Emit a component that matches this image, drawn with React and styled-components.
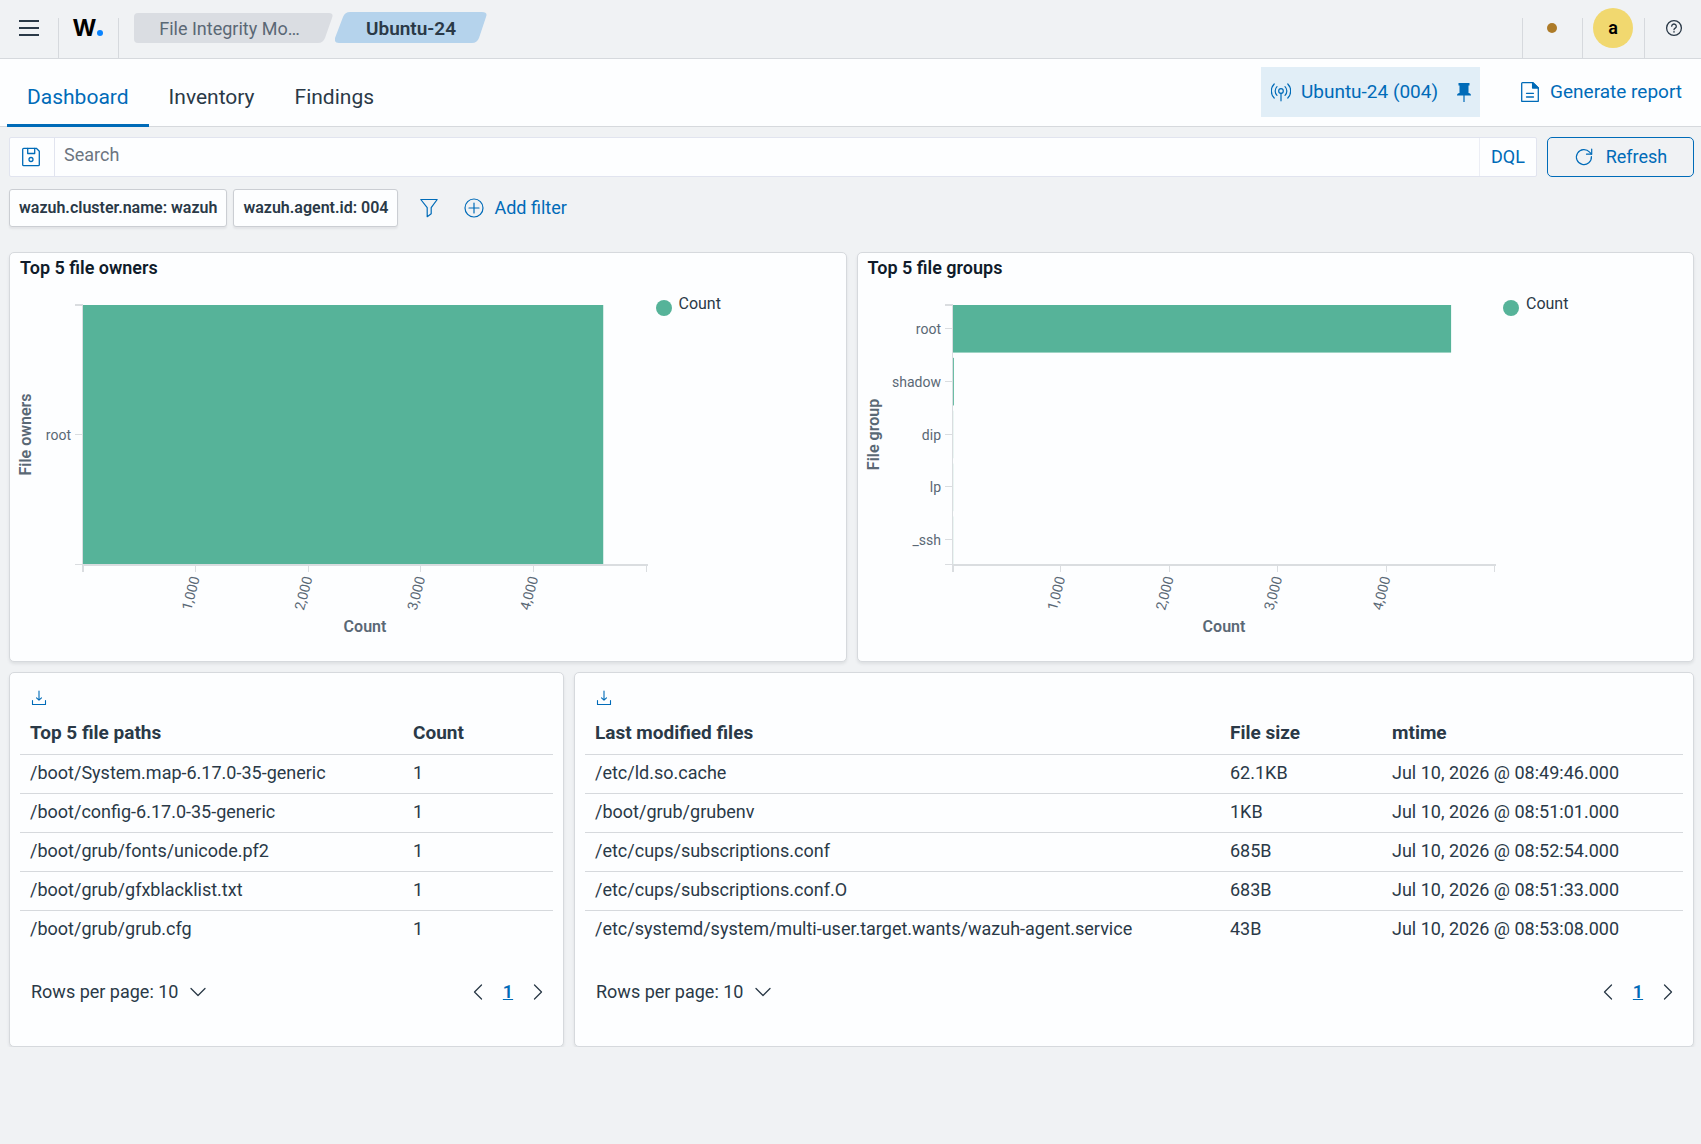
import React, { useLayoutEffect, useRef, useState } from "react";
import styled, { createGlobalStyle, css } from "styled-components";

const c = {
  page: "#f0f2f4",
  panel: "#fdfeff",
  line: "#d6d9dd",
  text: "#2a3947",
  heading: "#0f1b2a",
  subdued: "#5a6875",
  blue: "#006bb8",
  green: "#56b399",
};

const GlobalStyle = createGlobalStyle`
  *, *::before, *::after { box-sizing: border-box; }
  body {
    margin: 0;
    background: ${c.page};
    color: ${c.text};
    font: 400 18px/24px Roboto, sans-serif;
  }
  button, input, a { font: inherit; color: inherit; }
  button { margin: 0; padding: 0; border: 0; background: none; cursor: pointer; }
  a { text-decoration: none; }
  svg { display: block; flex: none; }
`;

const Header = styled.header`
  display: flex;
  justify-content: space-between;
  height: 59px;
  border-bottom: 1px solid ${c.line};
`;

const HeaderSide = styled.div`
  display: flex;
`;

const HeaderCell = styled.div`
  display: flex;
  width: ${(p) => p.$width}px;
  height: 58px;
  padding: ${(p) => (p.$divider ? "0 2px 2px 0" : "0 0 2px 2px")};
  align-items: center;
  justify-content: center;
  background: ${(p) =>
    p.$divider ? `linear-gradient(${c.line}, ${c.line}) right bottom / 1px 40px no-repeat` : "none"};
`;

const HeaderEdge = styled.div`
  width: 1px;
  height: 40px;
  margin-top: 18px;
  background: ${c.line};
`;

const IconButton = styled.button`
  display: flex;
  align-items: center;
  justify-content: center;
  width: ${(p) => p.$width || 30}px;
  height: 30px;
  color: ${(p) => (p.$plain ? c.text : c.blue)};
`;

const Logo = styled.a`
  display: flex;
  align-items: baseline;
  gap: 1px;
  color: #000;
  font: 700 23px/30px Inter, sans-serif;
`;

const LogoDot = styled.span`
  width: 6px;
  height: 6px;
  border-radius: 50%;
  background: #0a84ff;
`;

const Crumbs = styled.nav`
  display: flex;
  align-items: flex-end;
  height: 43px;
  padding-left: 15px;
  gap: 2px;
`;

const CrumbShape = styled.svg`
  position: absolute;
  inset: 0;
  width: 100%;
  height: 100%;
  z-index: -1;
`;

const Crumb = styled.a`
  position: relative;
  z-index: 0;
  width: ${(p) => p.$width}px;
  height: 30px;
  padding-right: 8px;
  line-height: 31px;
  text-align: center;
  color: ${c.subdued};
  ${(p) =>
    p.$current &&
    css`
      height: 31px;
      padding-right: 0;
      line-height: 34px;
      color: ${c.text};
      font-size: 19px;
      font-weight: 600;
    `}
`;

const StatusDot = styled.span`
  width: 10px;
  height: 10px;
  border-radius: 50%;
  background: #ad7b28;
`;

const Avatar = styled.button`
  width: 40px;
  height: 40px;
  border-radius: 50%;
  background: #f1d86f;
  color: #000;
  font-weight: 600;
`;

const TabBar = styled.div`
  display: flex;
  justify-content: space-between;
  height: 68px;
  padding: 0 19px 0 7px;
  background: ${c.panel};
  border-bottom: 1px solid ${c.line};
`;

const Tabs = styled.nav`
  display: flex;
  margin-bottom: -1px;
`;

const Tab = styled.a`
  padding: 25px 20px 0;
  font-size: 21px;
  line-height: 26px;
  ${(p) =>
    p.$active &&
    css`
      color: ${c.blue};
      border-bottom: 3px solid ${c.blue};
    `}
`;

const TabActions = styled.div`
  display: flex;
  height: 50px;
  margin-top: 8px;
  gap: 40px;
  color: ${c.blue};
  font-size: 19px;
`;

const AgentBox = styled.div`
  display: flex;
  align-items: center;
  padding: 0 6px 0 10px;
  gap: 16px;
  background: #e1eef7;
`;

const TextButton = styled.button`
  display: flex;
  align-items: center;
  gap: 10px;
  color: ${c.blue};
  white-space: nowrap;
`;

const TextPicker = styled(TextButton)`
  gap: 12px;
  color: ${c.text};
`;

const SearchRow = styled.div`
  display: flex;
  gap: 10px;
  padding: 10px 7px 0 9px;
`;

const SearchBox = styled.div`
  display: flex;
  flex: 1;
  height: 40px;
  border: 1px solid #e1e4ef;
  border-radius: 2px;
  background: ${c.panel};
`;

const SaveButton = styled(IconButton)`
  height: 38px;
  width: 45px;
  padding-right: 2px;
  border-right: 1px solid #e1e4ef;
`;

const SearchInput = styled.input`
  flex: 1;
  min-width: 0;
  border: 0;
  outline: 0;
  padding: 0 9px 4px;
  background: none;
  &::placeholder { color: #6c757f; opacity: 1; }
`;

const LanguageButton = styled.button`
  width: 57px;
  border-left: 1px solid #eceef5;
  color: ${c.blue};
`;

const RefreshButton = styled.button`
  display: flex;
  align-items: center;
  justify-content: center;
  gap: 12px;
  width: 147px;
  height: 40px;
  border: 1px solid ${c.blue};
  border-radius: 5px;
  color: ${c.blue};
`;

const FilterRow = styled.div`
  display: flex;
  align-items: center;
  padding: 12px 9px 0;
`;

const Pill = styled.button`
  height: 38px;
  margin-right: 6px;
  padding: 0 9px;
  border: 1px solid #cbced3;
  border-radius: 3px;
  background: ${c.panel};
  box-shadow: 0 2px 2px rgba(60, 70, 80, 0.08);
  color: ${c.text};
  font-size: 16px;
  font-weight: 600;
`;

const FilterActions = styled.div`
  display: flex;
  align-items: center;
  gap: 20px;
  padding-left: 10px;
`;

const Grid = styled.div`
  display: grid;
  grid-template-columns: ${(p) => p.$columns};
  gap: 10px;
  padding: ${(p) => p.$top}px 7px 0 9px;
`;

const Panel = styled.section`
  min-width: 0;
  border: 1px solid ${c.line};
  border-radius: 5px;
  background: ${c.panel};
  box-shadow: 0 2px 3px rgba(60, 70, 80, 0.1);
`;

const ChartTitle = styled.h2`
  margin: 0;
  padding: 3px 10px 0;
  color: ${c.heading};
  font-size: 18px;
  font-weight: 600;
  line-height: 24px;
`;

const ChartBody = styled.div`
  display: flex;
  height: 381px;
`;

const Plot = styled.div`
  flex: 1;
  min-width: 0;
`;

const Legend = styled.ul`
  display: flex;
  width: 197px;
  height: 24px;
  margin: 12px 0 0;
  padding: 0 0 0 7px;
  list-style: none;
  font-size: 16px;
`;

const LegendItem = styled.li`
  display: flex;
  gap: 7px;
`;

const LegendDot = styled.span`
  width: 16px;
  height: 16px;
  margin-top: 8px;
  border-radius: 50%;
  background: ${c.green};
`;

const AxisText = styled.text`
  fill: ${c.subdued};
  font-size: ${(p) => (p.$title ? 16 : 14)}px;
  font-weight: ${(p) => (p.$title ? 600 : 400)};
  text-anchor: ${(p) => p.$anchor || "middle"};
`;

const TablePanel = styled(Panel)`
  display: flex;
  flex-direction: column;
  height: 375px;
  padding: 9px 10px;
`;

const Download = styled(IconButton)`
  margin-left: 4px;
  padding-top: 2px;
`;

const Table = styled.table`
  width: 100%;
  border-collapse: collapse;
  table-layout: fixed;
`;

const Th = styled.th`
  width: ${(p) => p.$width || "auto"};
  height: 42px;
  padding: 0 10px;
  border-bottom: 1px solid ${c.line};
  text-align: left;
  font-size: 19px;
  font-weight: 700;
`;

const Td = styled.td`
  height: 39px;
  padding: 0 10px 2px;
  border-bottom: 1px solid ${c.line};
  white-space: nowrap;
  tr:last-child > & { border-bottom: 0; }
`;

const TableFooter = styled.div`
  display: flex;
  justify-content: space-between;
  padding: 28px 0 0 11px;
`;

const Pager = styled.nav`
  display: flex;
  align-items: center;
`;

const PageLink = styled.a`
  width: 30px;
  text-align: center;
  color: ${c.blue};
  font-weight: 600;
  text-decoration: underline;
`;

const stroke = { fill: "none", stroke: "currentColor", strokeLinecap: "round", strokeLinejoin: "round" };

const MenuIcon = () => (
  <svg width="20" height="20" viewBox="0 0 20 20" fill="currentColor">
    <path d="M0 2h20v2H0zM0 9h20v2H0zM0 16h20v2H0z" />
  </svg>
);
const HelpIcon = () => (
  <svg width="18" height="18" viewBox="0 0 18 18" {...stroke} strokeWidth="1.3">
    <circle cx="9" cy="9" r="7.4" />
    <path d="M6.7 7.2a2.3 2.2 0 1 1 3.5 1.9c-.8.5-1.2.8-1.2 1.6" />
    <path d="M9 12.8v.3" strokeWidth="1.5" />
  </svg>
);
const AntennaIcon = () => (
  <svg width="20" height="20" viewBox="0 0 20 20" {...stroke} strokeWidth="1.2">
    <circle cx="10" cy="9" r="2.3" />
    <path d="M10 11.4V18.8" />
    <path d="M6 4.6a6.2 6.2 0 0 0 0 8.800M14 4.600a6.200 6.200 0 0 1 0 8.800" />
    <path d="M3.200 2a10 10 0 0 0 0 14M16.800 2a10 10 0 0 1 0 14" />
  </svg>
);
const PinIcon = () => (
  <svg width="20" height="20" viewBox="0 0 20 20" fill="currentColor">
    <path d="M4.500 1h11v2.500h-1V11c1.500.3 2.500 1 2.500 2.500h-6.400V20H9.400v-6.500H3C3 12 4 11.300 5.500 11V3.500h-1z" />
  </svg>
);
const ReportIcon = () => (
  <svg width="20" height="20" viewBox="0 0 20 20" {...stroke} strokeWidth="1.3">
    <path d="M2.500.7H13l5.300 5.300v13.300H1.700V1.500c0-.5.300-.8.800-.8z" />
    <path d="M12.600.7l5.700 5.300h-5.700z" fill="currentColor" />
    <path d="M6.500 11.300h7M6.500 15h7" />
  </svg>
);
const SaveIcon = () => (
  <svg width="20" height="20" viewBox="0 0 20 20" {...stroke} strokeWidth="1.3">
    <path d="M2.700 1.300h12.600l3 3v13.400q0 1-1 1H2.700q-1 0-1-1V2.300q0-1 1-1z" />
    <path d="M6.700 1.300v5.200h7V1.300" />
    <circle cx="10" cy="12.500" r="2" />
  </svg>
);
const RefreshIcon = () => (
  <svg width="20" height="20" viewBox="0 0 20 20" {...stroke} strokeWidth="1.2">
    <path d="M17.400 9.500A7.500 7.500 0 1 1 15.600 5.200l1.800 1.800" />
    <path d="M17.700 2v5.200h-5.200" />
  </svg>
);
const FunnelIcon = () => (
  <svg width="20" height="20" viewBox="0 0 20 20" {...stroke} strokeWidth="1.2">
    <path d="M1.800 1.500h16.400L12.200 9.700v6l-4 3V9.700z" />
  </svg>
);
const PlusCircleIcon = () => (
  <svg width="20" height="20" viewBox="0 0 20 20" {...stroke} strokeWidth="1.2">
    <circle cx="10" cy="10" r="9" />
    <path d="M10 5v10M5 10h10" />
  </svg>
);
const DownloadIcon = () => (
  <svg width="16" height="16" viewBox="0 0 16 16" {...stroke} strokeWidth="1.1">
    <path d="M1.500 10.500v4h13v-4M8 1v9M5.500 7.800L8 10.200l2.500-2.400" />
  </svg>
);
const chevrons = { down: "M1 4.500l7 7 7-7", left: "M11.500 1l-7 7 7 7", right: "M4.500 1l7 7-7 7" };
const Chevron = ({ dir }) => (
  <svg width="16" height="16" viewBox="0 0 16 16" {...stroke} strokeWidth="1.3">
    <path d={chevrons[dir]} />
  </svg>
);

const GrayCrumb = () => (
  <CrumbShape viewBox="0 0 199 30" preserveAspectRatio="none" fill="#dadde2">
    <path d="M4 0h191q5 0 3 5l-7 20q-2 5-7 5H4q-4 0-4-4V4q0-4 4-4z" />
  </CrumbShape>
);
const BlueCrumb = () => (
  <CrumbShape viewBox="0 0 152 31" preserveAspectRatio="none" fill="#b5d3ec">
    <path d="M15 0h132q6 0 4 5l-7 21q-2 5-7 5H4q-5 0-4-5L8 5q2-5 7-5z" />
  </CrumbShape>
);

function useWidth(initial) {
  const ref = useRef(null);
  const [width, setWidth] = useState(initial);
  useLayoutEffect(() => {
    const update = () => setWidth(Math.round(ref.current.getBoundingClientRect().width));
    update();
    window.addEventListener("resize", update);
    return () => window.removeEventListener("resize", update);
  }, []);
  return [ref, width];
}

const TOP = 25;
const HEIGHT = 259;
const MAX = 5000;

function BarChart({ title, axis, bars, left, bandRatio }) {
  const [ref, width] = useWidth(639);
  const right = width - 2;
  const x = (v) => left + ((right - left) * v) / MAX;
  const band = HEIGHT / (bars.length - 1 + bandRatio);
  const thick = band * bandRatio;
  const bottom = TOP + HEIGHT;
  const middle = TOP + HEIGHT / 2;
  return (
    <Panel>
      <ChartTitle>{title}</ChartTitle>
      <ChartBody>
        <Plot ref={ref}>
          <svg width={width} height="380" role="img" aria-label={title}>
            <g stroke="#dadde0" strokeWidth="1" shapeRendering="crispEdges">
              <path d={`M${left - 8} ${TOP}H${left}`} strokeWidth="2" />
              <path d={`M${left - 8} ${bottom + 0.5}H${left}M${left - 0.5} ${TOP}V${bottom}`} />
              <path d={`M${left} ${bottom + 1}H${right + 0.5}M${left} ${bottom}v8`} strokeWidth="2" />
              {[1000, 2000, 3000, 4000, 5000].map((v) => (
                <path key={v} d={`M${Math.round(x(v)) - 0.5} ${bottom}v8`} />
              ))}
              {bars.map((b, i) => (
                <path key={b.name} d={`M${left - 8} ${Math.round(TOP + i * band + thick / 2) - 0.5}h7`} />
              ))}
            </g>
            {bars.map((b, i) => (
              <React.Fragment key={b.name}>
                <rect x={left} y={TOP + i * band} width={x(b.value) - left} height={thick} fill={c.green} />
                <AxisText x={left - 12} y={TOP + i * band + thick / 2 + 5} $anchor="end">
                  {b.name}
                </AxisText>
              </React.Fragment>
            ))}
            {[1000, 2000, 3000, 4000].map((v) => (
              <AxisText key={v} $anchor="end" transform={`translate(${x(v) + 4} ${bottom + 14}) rotate(-75)`}>
                {v.toLocaleString("en-US")}
              </AxisText>
            ))}
            <AxisText $title x={(left + right) / 2} y={bottom + 68}>Count</AxisText>
            <AxisText $title transform={`translate(21 ${middle}) rotate(-90)`}>{axis}</AxisText>
          </svg>
        </Plot>
        <Legend>
          <LegendItem><LegendDot />Count</LegendItem>
        </Legend>
      </ChartBody>
    </Panel>
  );
}

function DataTable({ columns, rows }) {
  return (
    <TablePanel>
      <Download aria-label="Download"><DownloadIcon /></Download>
      <Table>
        <thead>
          <tr>{columns.map((col) => <Th key={col.name} $width={col.width}>{col.name}</Th>)}</tr>
        </thead>
        <tbody>
          {rows.map((row) => (
            <tr key={row[0]}>{row.map((cell, i) => <Td key={i}>{cell}</Td>)}</tr>
          ))}
        </tbody>
      </Table>
      <TableFooter>
        <TextPicker>Rows per page: 10<Chevron dir="down" /></TextPicker>
        <Pager aria-label="Pages">
          <IconButton $plain aria-label="Previous page"><Chevron dir="left" /></IconButton>
          <PageLink href="#1">1</PageLink>
          <IconButton $plain aria-label="Next page"><Chevron dir="right" /></IconButton>
        </Pager>
      </TableFooter>
    </TablePanel>
  );
}

const pathColumns = [{ name: "Top 5 file paths" }, { name: "Count", width: "150px" }];
const pathRows = [
  ["/boot/System.map-6.17.0-35-generic", "1"],
  ["/boot/config-6.17.0-35-generic", "1"],
  ["/boot/grub/fonts/unicode.pf2", "1"],
  ["/boot/grub/gfxblacklist.txt", "1"],
  ["/boot/grub/grub.cfg", "1"],
];

const fileColumns = [
  { name: "Last modified files" },
  { name: "File size", width: "162px" },
  { name: "mtime", width: "301px" },
];
const fileRows = [
  ["/etc/ld.so.cache", "62.1KB", "Jul 10, 2026 @ 08:49:46.000"],
  ["/boot/grub/grubenv", "1KB", "Jul 10, 2026 @ 08:51:01.000"],
  ["/etc/cups/subscriptions.conf", "685B", "Jul 10, 2026 @ 08:52:54.000"],
  ["/etc/cups/subscriptions.conf.O", "683B", "Jul 10, 2026 @ 08:51:33.000"],
  ["/etc/systemd/system/multi-user.target.wants/wazuh-agent.service", "43B", "Jul 10, 2026 @ 08:53:08.000"],
];

const ownerBars = [{ name: "root", value: 4612 }];
const groupBars = [
  { name: "root", value: 4595 },
  { name: "shadow", value: 8 },
  { name: "dip", value: 1 },
  { name: "lp", value: 1 },
  { name: "_ssh", value: 1 },
];

export default function App() {
  return (
    <>
      <GlobalStyle />
      <Header>
        <HeaderSide>
          <HeaderCell $width={59} $divider>
            <IconButton $plain aria-label="Menu"><MenuIcon /></IconButton>
          </HeaderCell>
          <HeaderCell $width={60} $divider>
            <Logo href="#home" aria-label="Home">W<LogoDot /></Logo>
          </HeaderCell>
          <Crumbs aria-label="Breadcrumbs">
            <Crumb href="#fim" $width={199}><GrayCrumb />File Integrity Mo…</Crumb>
            <Crumb href="#agent" $width={152} $current><BlueCrumb />Ubuntu-24</Crumb>
          </Crumbs>
        </HeaderSide>
        <HeaderSide>
          <HeaderEdge />
          <HeaderCell $width={60} $divider><StatusDot /></HeaderCell>
          <HeaderCell $width={62} $divider><Avatar aria-label="Account">a</Avatar></HeaderCell>
          <HeaderCell $width={56}>
            <IconButton $plain aria-label="Help"><HelpIcon /></IconButton>
          </HeaderCell>
        </HeaderSide>
      </Header>
      <TabBar>
        <Tabs>
          <Tab href="#dashboard" $active>Dashboard</Tab>
          <Tab href="#inventory">Inventory</Tab>
          <Tab href="#findings">Findings</Tab>
        </Tabs>
        <TabActions>
          <AgentBox>
            <TextButton><AntennaIcon />Ubuntu-24 (004)</TextButton>
            <IconButton $width={20} aria-label="Unpin agent"><PinIcon /></IconButton>
          </AgentBox>
          <TextButton><ReportIcon />Generate report</TextButton>
        </TabActions>
      </TabBar>
      <SearchRow>
        <SearchBox>
          <SaveButton aria-label="Saved queries"><SaveIcon /></SaveButton>
          <SearchInput placeholder="Search" aria-label="Search" />
          <LanguageButton>DQL</LanguageButton>
        </SearchBox>
        <RefreshButton><RefreshIcon />Refresh</RefreshButton>
      </SearchRow>
      <FilterRow>
        <Pill>wazuh.cluster.name: wazuh</Pill>
        <Pill>wazuh.agent.id: 004</Pill>
        <FilterActions>
          <IconButton aria-label="Filter options"><FunnelIcon /></IconButton>
          <TextButton><PlusCircleIcon />Add filter</TextButton>
        </FilterActions>
      </FilterRow>
      <main>
        <Grid $columns="1fr 1fr" $top={25}>
          <BarChart title="Top 5 file owners" axis="File owners" left={73} bandRatio={1} bars={ownerBars} />
          <BarChart title="Top 5 file groups" axis="File group" left={95} bandRatio={0.9} bars={groupBars} />
        </Grid>
        <Grid $columns="555fr 1120fr" $top={10}>
          <DataTable columns={pathColumns} rows={pathRows} />
          <DataTable columns={fileColumns} rows={fileRows} />
        </Grid>
      </main>
    </>
  );
}
